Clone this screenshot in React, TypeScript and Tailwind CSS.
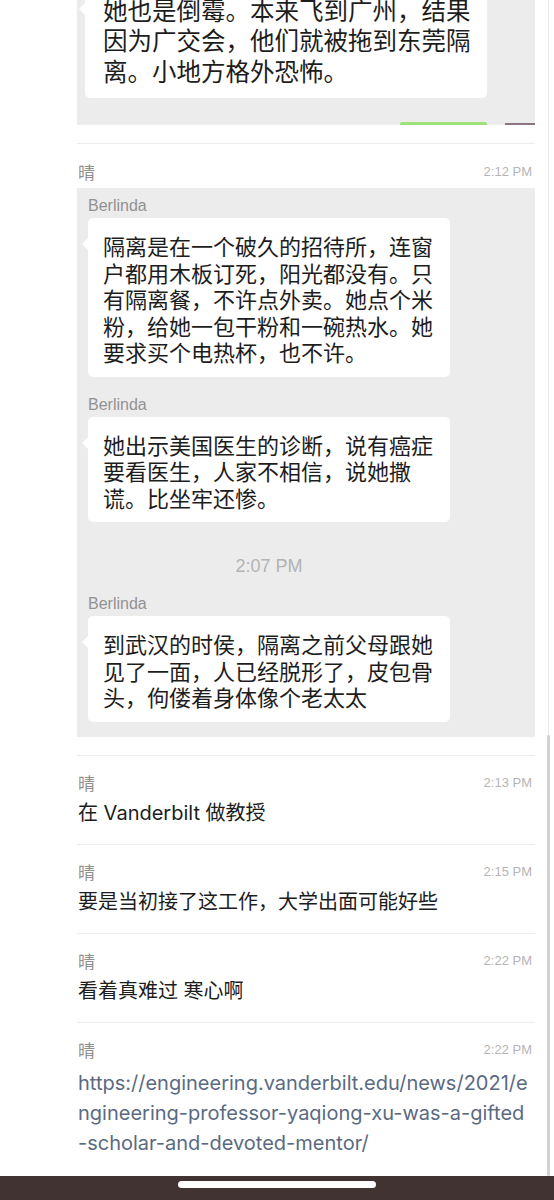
import React from "react";

const CJK = "font-['Noto_Sans_CJK_SC',sans-serif]";
const MIX = "font-['Inter','Noto_Sans_CJK_SC',sans-serif]";
const LAT = "font-['Liberation_Sans','Noto_Sans_CJK_SC',sans-serif]";

function Bubble({ lines }: { lines: string[] }) {
  return (
    <div
      className={`relative ml-[11px] w-[362px] rounded-[5px] bg-white pl-[15px] pr-[10px] pt-[14px] pb-[12px] text-[22px] leading-[26.5px] text-[#1d1d1d] ${CJK}`}
    >
      <span className="absolute left-[-6px] top-[20px] h-0 w-0 border-y-[6px] border-r-[6px] border-y-transparent border-r-white" />
      <p className="whitespace-pre">{lines.join("\n")}</p>
    </div>
  );
}

function Sender() {
  return (
    <div className={`ml-[11px] h-[18px] text-[16px] leading-[18px] text-[#929292] ${LAT}`}>
      Berlinda
    </div>
  );
}

function Header({ time }: { time: string }) {
  return (
    <div className="flex h-[18px] items-center justify-between pl-[1px] pr-[3px]">
      <span className={`text-[17px] leading-[18px] text-[#8f8f8f] ${CJK}`}>晴</span>
      <span className={`text-[13px] leading-[18px] text-[#b5b5b5] ${LAT}`}>{time}</span>
    </div>
  );
}

export default function App() {
  return (
    <div className="relative flex h-[1200px] w-[554px] flex-col overflow-hidden bg-white">
      <div className="flex flex-1 flex-col pl-[77px] pr-[19px]">
        {/* previous quoted block (cut at top) */}
        <div className="relative flex h-[125px] flex-col justify-end overflow-hidden bg-[#ececec] pb-[27px]">
          <div
            className={`relative ml-[8px] w-[402px] rounded-[5px] bg-white pl-[18px] pt-[12px] pb-[12px] text-[24.5px] leading-[30.5px] text-[#1d1d1d] ${CJK}`}
          >
            <span className="absolute left-[-6px] top-[20px] h-0 w-0 border-y-[6px] border-r-[6px] border-y-transparent border-r-white" />
            <p className="whitespace-pre">
              {"她也是倒霉。本来飞到广州，结果\n因为广交会，他们就被拖到东莞隔\n离。小地方格外恐怖。"}
            </p>
          </div>
          <div className="absolute bottom-0 left-[323px] h-[3px] w-[87px] rounded-t-[2px] bg-[#9ee07a]" />
          <div className="absolute bottom-0 left-[428px] h-[2px] w-[30px] bg-[#8d7380]" />
        </div>

        {/* message with quoted chat history */}
        <div className="mt-[18px] border-t border-[#ececec] pt-[19px] pb-[18px]">
          <Header time="2:12 PM" />
          <div className="mt-[7px] bg-[#ececec] pt-[9px] pb-[15px]">
            <Sender />
            <div className="mt-[3px]">
              <Bubble
                lines={[
                  "隔离是在一个破久的招待所，连窗",
                  "户都用木板订死，阳光都没有。只",
                  "有隔离餐，不许点外卖。她点个米",
                  "粉，给她一包干粉和一碗热水。她",
                  "要求买个电热杯，也不许。",
                ]}
              />
            </div>
            <div className="mt-[19px]">
              <Sender />
            </div>
            <div className="mt-[3px]">
              <Bubble
                lines={[
                  "她出示美国医生的诊断，说有癌症",
                  "要看医生，人家不相信，说她撒",
                  "谎。比坐牢还惨。",
                ]}
              />
            </div>
            <div
              className={`mt-[34px] ml-[11px] h-[20px] w-[362px] text-center text-[18px] leading-[20px] text-[#b3b3b3] ${LAT}`}
            >
              2:07 PM
            </div>
            <div className="mt-[19px]">
              <Sender />
            </div>
            <div className="mt-[3px]">
              <Bubble
                lines={[
                  "到武汉的时侯，隔离之前父母跟她",
                  "见了一面，人已经脱形了，皮包骨",
                  "头，佝偻着身体像个老太太",
                ]}
              />
            </div>
          </div>
        </div>

        <div className="border-t border-[#ececec] pt-[18px] pb-[17px]">
          <Header time="2:13 PM" />
          <div className={`mt-[7px] pl-[1px] text-[20px] leading-[28px] text-[#1d1d1d] ${MIX}`}>
            在 Vanderbilt 做教授
          </div>
        </div>

        <div className="border-t border-[#ececec] pt-[18px] pb-[17px]">
          <Header time="2:15 PM" />
          <div className={`mt-[7px] pl-[1px] text-[20px] leading-[28px] text-[#1d1d1d] ${MIX}`}>
            要是当初接了这工作，大学出面可能好些
          </div>
        </div>

        <div className="border-t border-[#ececec] pt-[18px] pb-[17px]">
          <Header time="2:22 PM" />
          <div className={`mt-[7px] pl-[1px] text-[20px] leading-[28px] text-[#1d1d1d] ${MIX}`}>
            看着真难过 寒心啊
          </div>
        </div>

        <div className="border-t border-[#ececec] pt-[18px]">
          <Header time="2:22 PM" />
          <p
            className={`mt-[9px] whitespace-pre pl-[1px] text-[20px] leading-[30px] text-[#5a6a82] ${MIX}`}
          >
            {"https://engineering.vanderbilt.edu/news/2021/e\nngineering-professor-yaqiong-xu-was-a-gifted\n-scholar-and-devoted-mentor/"}
          </p>
        </div>
      </div>

      {/* home indicator bar */}
      <div className="flex h-[24px] shrink-0 justify-center bg-[#413331] pt-[5px]">
        <div className="h-[7px] w-[198px] rounded-full bg-white" />
      </div>

      {/* scrollbar overlay */}
      <div className="absolute left-[548px] top-0 h-[1176px] w-[1px] bg-[#e9e9e9]" />
      <div className="absolute left-[547px] top-[735px] h-[441px] w-[3px] rounded-full bg-[#d2d2d2]" />
    </div>
  );
}
